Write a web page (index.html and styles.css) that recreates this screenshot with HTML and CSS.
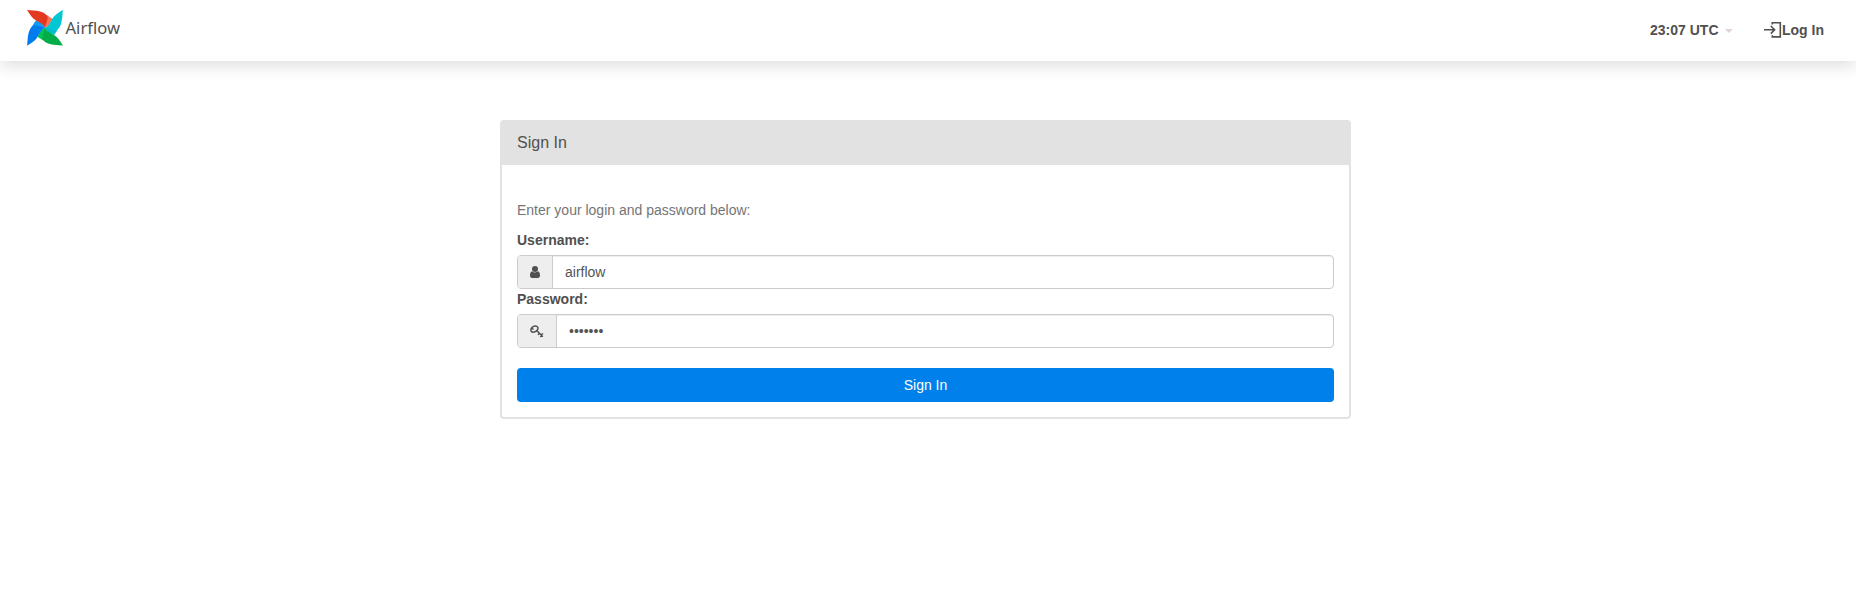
FILE: index.html
```html
<!DOCTYPE html>
<html lang="en">
<head>
<meta charset="utf-8">
<title>Sign In - Airflow</title>
<link rel="stylesheet" href="styles.css">
</head>
<body>
<header class="navbar">
  <a class="brand" href="#" aria-label="Airflow">
    <svg width="100" height="36" viewBox="0 0 100 36">
      <defs>
        <path id="blade" d="M0 0C10 .6 16 1 20 5.500C22 8.500 19 12 18 17.800C16 13.500 12 12.300 9 10.500C5 8.300 2.800 4 0 0Z"/>
        <path id="fold" d="M19.500 5C22 6.300 24 7.700 25.300 8.800C24 12 22.800 16 18 17.800L17 15Z"/>
      </defs>
      <use href="#fold" fill="#ff7557"/>
      <use href="#fold" fill="#00bcc8" transform="rotate(90 18 17.800)"/>
      <use href="#fold" fill="#04c458" transform="rotate(180 18 17.800)"/>
      <use href="#fold" fill="#119bf5" transform="rotate(270 18 17.800)"/>
      <use href="#blade" fill="#e43921"/>
      <use href="#blade" fill="#00c7d4" transform="rotate(90 18 17.800)"/>
      <use href="#blade" fill="#00ad46" transform="rotate(180 18 17.800)"/>
      <use href="#blade" fill="#017cee" transform="rotate(270 18 17.800)"/>
      <text class="wordmark" x="38.500" y="24" textLength="54.500" lengthAdjust="spacingAndGlyphs">Airflow</text>
    </svg>
  </a>
  <nav class="nav">
    <a class="nav-link clock" href="#">23:07 UTC<span class="caret"></span></a>
    <a class="nav-link" href="#"><svg class="login-icon" width="20" height="20" viewBox="0 0 20 20"><path d="M2 9.800h10.500M8.800 6l3.800 3.800-3.800 3.800M10.300 4.400V2.700h8v14.200h-8V15.200"/></svg>Log In</a>
  </nav>
</header>
<main class="panel">
  <h1 class="panel-title">Sign In</h1>
  <form class="panel-body">
    <p class="help">Enter your login and password below:</p>
    <label class="label" for="username">Username:</label>
    <div class="input-group">
      <span class="addon"><svg width="10" height="12" viewBox="0 0 10 12"><circle cx="5" cy="3" r="3"/><path d="M2.200 5.200C.5 5.500 0 7.500 0 9.500C0 11 .8 12 2 12h6c1.200 0 2-1 2-2.500c0-2-.5-4-2.200-4.300C6.500 6.800 3.500 6.800 2.200 5.200Z"/></svg></span>
      <input class="input" id="username" type="text" value="airflow">
    </div>
    <label class="label" for="password">Password:</label>
    <div class="input-group">
      <span class="addon"><svg width="14" height="13" viewBox="0 0 14 13"><g class="key"><path d="M1.200 6.200C.2 4.500 2 1.200 5 .9C7.900.8 8.700 3.200 7.300 5C5.800 7.200 2.500 8 1.200 6.200Z"/><path d="M1.900 3.500L3.500 4.300M6.500 5.300l6.300 6.500M9.300 8.500l-1.300 1.300M11.600 10.500l-1.300 1.500M11.200 9.800l1.800-1.300"/></g></svg></span>
      <input class="input" id="password" type="password" value="airflow">
    </div>
    <button class="submit" type="button">Sign In</button>
  </form>
</main>
</body>
</html>
```
FILE: styles.css
```css
* { box-sizing: border-box; }
body {
  margin: 0;
  background: #fff;
  color: #51504f;
  font: 14px/20px "Liberation Sans", Arial, sans-serif;
}
.navbar {
  display: flex;
  justify-content: space-between;
  height: 61px;
  padding: 10px 32px 0 27px;
  background: #fff;
  box-shadow: 0 4px 16px rgba(0, 0, 0, .14);
}
.brand { height: 36px; }
.brand svg { display: block; }
.wordmark {
  fill: #51504f;
  font: 16.5px "Noto Sans", sans-serif;
}
.nav { display: flex; gap: 29px; height: 40px; }
.nav-link {
  display: flex;
  align-items: center;
  color: #51504f;
  font-weight: 700;
  text-decoration: none;
}
.caret {
  margin: 1px .5px 0 6px;
  border: 4px solid transparent;
  border-top-color: #e0d3e0;
  border-bottom: 0;
}
.login-icon {
  fill: none;
  stroke: #51504f;
  stroke-width: 1.6;
}
.panel {
  width: 851px;
  margin: 59px 0 0 500px;
  border: 2px solid #e2e2e2;
  border-radius: 4px;
}
.panel-title {
  height: 43px;
  margin: 0;
  padding: 11px 15px 0;
  background: #e2e2e2;
  font-size: 16px;
  font-weight: 400;
  line-height: 20px;
}
.panel-body { padding: 35px 15px 15px; }
.help { margin: 0 0 10px; color: #757575; }
.label { display: block; height: 25px; font-weight: 700; }
.input-group {
  display: flex;
  height: 34px;
  border: 1px solid #ccc;
  border-radius: 4px;
  box-shadow: inset 0 1px 1px rgba(0, 0, 0, .075);
}
.addon {
  display: flex;
  align-items: center;
  padding: 0 12px;
  border-right: 1px solid #ccc;
  border-radius: 3px 0 0 3px;
  background: #eee;
  fill: #51504f;
}
.key { fill: none; stroke: #51504f; stroke-width: 1.5; }
.input {
  flex: 1;
  min-width: 0;
  padding: 0 12px;
  border: 0;
  outline: 0;
  background: transparent;
  color: #555;
  font: inherit;
}
.submit {
  display: block;
  width: 100%;
  height: 34px;
  margin-top: 20px;
  border: 0;
  border-radius: 4px;
  background: #0080eb;
  color: #fff;
  font: inherit;
}
```
